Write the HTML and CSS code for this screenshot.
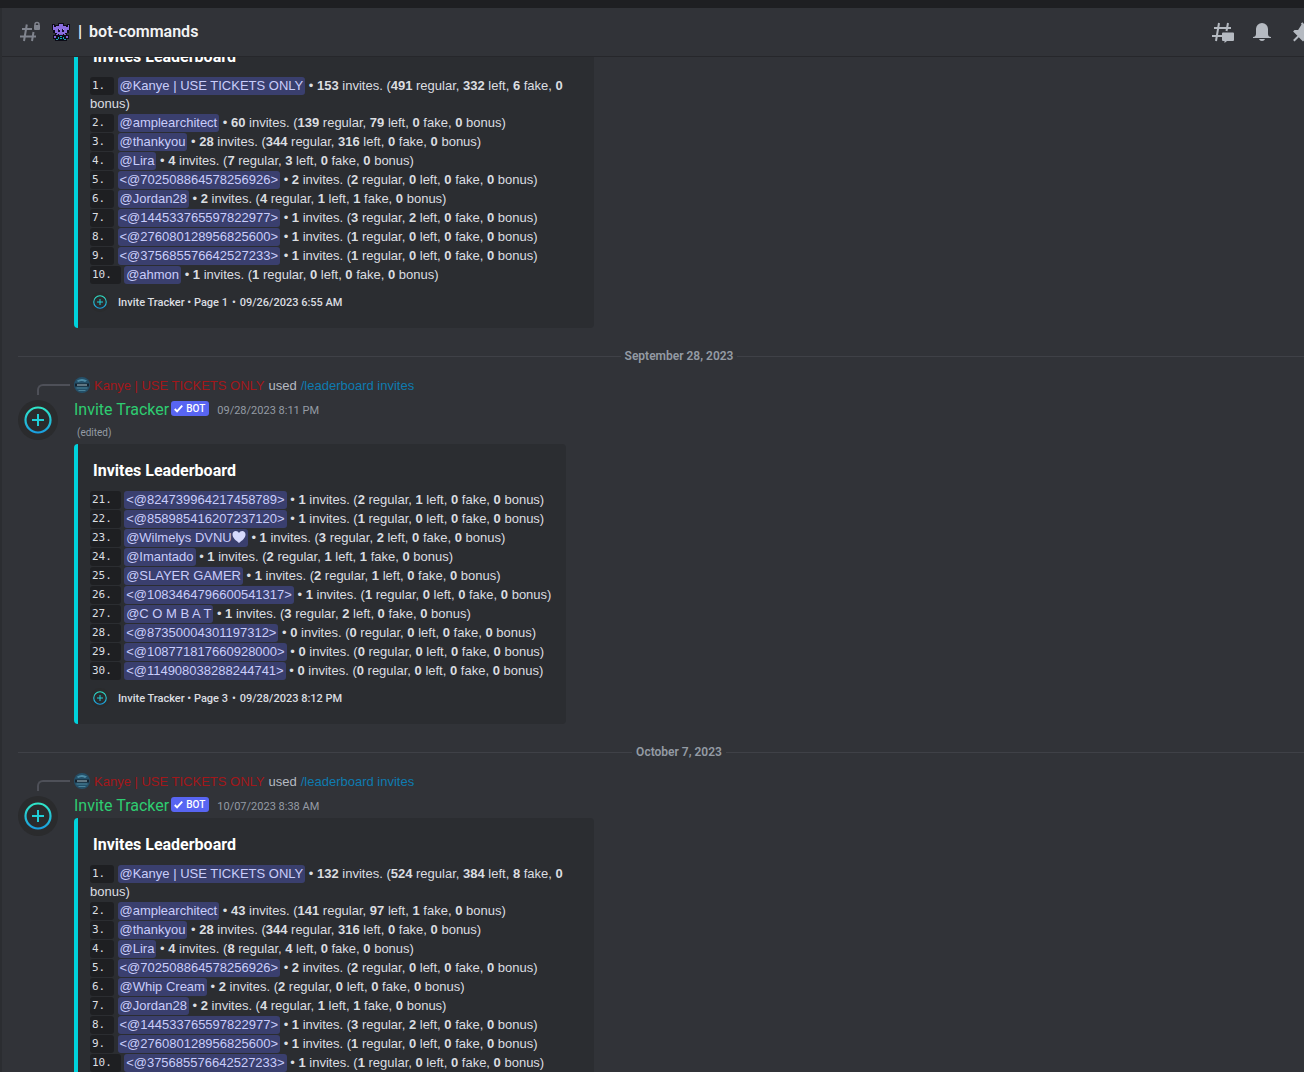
FILE: index.html
```
<!DOCTYPE html>
<html lang="en">
<head>
    <meta charset="UTF-8">
    <meta name="viewport" content="width=device-width, initial-scale=1.0">
    <title>bot-commands</title>
    <link rel="stylesheet" href="styles.css">
</head>
<body>
    <!-- Shared icons -->
    <svg class="icon-defs" aria-hidden="true">
        <defs>
            <linearGradient id="ring" x1="0" y1="0" x2="0" y2="1">
                <stop offset="0" stop-color="#2fe6c8"/>
                <stop offset="1" stop-color="#1a9fe0"/>
            </linearGradient>
            <symbol id="tracker" viewBox="0 0 40 40">
                <circle cx="20" cy="20" r="20" fill="#2a2b2d"/>
                <circle cx="20" cy="20" r="12.5" fill="none" stroke="url(#ring)" stroke-width="2.2"/>
                <path d="M20 14v12M14 20h12" stroke="#20cfd8" stroke-width="2" fill="none"/>
            </symbol>
            <symbol id="globe" viewBox="0 0 16 16">
                <circle cx="8" cy="8" r="8" fill="#245069"/>
                <path d="M3 3.5Q8 .5 13 3.500L11 5Q8 3 4 5z" fill="#4d8ba5"/>
                <path d="M1 6.500h14v3H1z" fill="#14222f"/>
                <path d="M3 8h10" stroke="#a5c3cf" stroke-width="1.500" stroke-opacity=".7"/>
                <path d="M2.500 11h11M4.500 13.500h7" stroke="#4a8299" stroke-width="1"/>
            </symbol>
            <symbol id="check" viewBox="0 0 16 16">
                <path d="M4 8.500 6.500 11 12 5" fill="none" stroke="#fff" stroke-width="2"/>
            </symbol>
        </defs>
    </svg>

    <div class="title-bar"></div>
    <div class="app">
        <header class="channel-header">
            <svg class="channel-icon" viewBox="0 0 24 24" aria-hidden="true">
                <path d="M8.800 4.500 6 21M15.500 12 14 21M4 9h10M2 16.500h16" fill="none" stroke="#80848e" stroke-width="2"/>
                <path d="M17 6V4.500a2 2 0 0 1 4 0V6" fill="none" stroke="#80848e" stroke-width="1.500"/>
                <rect x="16" y="5" width="6" height="5" rx="1" fill="#80848e"/>
            </svg>
            <svg class="channel-emoji" viewBox="0 0 18 18" shape-rendering="crispEdges" aria-hidden="true">
                <path d="M0 1h3v1h3V0h6v2h3V1h3v6h-1v3h-2v2h2v4h-2v2H3v-2H1v-4h2v-2H1V7H0z" fill="#0c0b16"/>
                <path d="M1 2h1v2h2V3h3V1h4v2h3v1h2V2h1v5h-2v3h-2v1H5v-1H3V7H1z" fill="#8b6ee0"/>
                <path d="M6 6h2v3H6zM10 6h2v3h-2z" fill="#15102b"/>
                <path d="M7 6h1v1H7zM11 6h1v1h-1z" fill="#b59bf5"/>
                <path d="M2 13h2v2H2zM14 13h2v2h-2zM4 11h2v1H4zM12 11h2v1h-2zM7 11h4v1H7z" fill="#7d61cf"/>
                <path d="M8 13h2v1H8zM6 14h1v2H6zM11 14h1v2h-1zM8 15h2v1H8zM4 16h2v1H4zM12 16h2v1h-2z" fill="#13a6b4"/>
            </svg>
            <h1 class="channel-name"><span class="bar">|</span>bot-commands</h1>
            <div class="toolbar">
                <button type="button" aria-label="Threads">
                    <svg viewBox="0 0 24 24">
                        <path d="M9 3 6 21M18 3l-1.500 8M4 8h17M2 16h10" fill="none" stroke="#b5bac1" stroke-width="2"/>
                        <path d="M13 12.500h10a1 1 0 0 1 1 1V20a1 1 0 0 1-1 1h-6l-2.500 2v-2H13a1 1 0 0 1-1-1v-6.500a1 1 0 0 1 1-1z" fill="#b5bac1"/>
                    </svg>
                </button>
                <button type="button" aria-label="Notification settings">
                    <svg viewBox="0 0 24 24">
                        <path d="M18 9v5c0 1.700 1.300 3 3 3v1H3v-1c1.700 0 3-1.300 3-3V9a6 6 0 0 1 12 0zM12 21c-1.500 0-2.500-.7-3-2h6c-.5 1.300-1.500 2-3 2z" fill="#b5bac1"/>
                    </svg>
                </button>
                <button type="button" aria-label="Pinned messages">
                    <svg viewBox="0 0 24 24">
                        <path d="M22 12 12.300 2.300 10.900 3.700l.7.700-3.500 5.700H4.500L3.100 11.500l4.300 4.300-4.300 4.200 1.400 1.400 4.300-4.200 4.200 4.200 1.400-1.400v-3.500l5-4.200.7.700z" fill="#b5bac1"/>
                    </svg>
                </button>
            </div>
        </header>

        <main class="messages">
            <article class="message first">
                <div class="embed">
                    <h2 class="embed-title">Invites Leaderboard</h2>
                    <ul class="ranks">
                        <li><code>1. </code> <span class="mention">@Kanye | USE TICKETS ONLY</span> • <b>153</b> invites. (<b>491</b> regular, <b>332</b> left, <b>6</b> fake, <b>0</b> bonus)</li>
                        <li><code>2. </code> <span class="mention">@amplearchitect</span> • <b>60</b> invites. (<b>139</b> regular, <b>79</b> left, <b>0</b> fake, <b>0</b> bonus)</li>
                        <li><code>3. </code> <span class="mention">@thankyou</span> • <b>28</b> invites. (<b>344</b> regular, <b>316</b> left, <b>0</b> fake, <b>0</b> bonus)</li>
                        <li><code>4. </code> <span class="mention">@Lira</span> • <b>4</b> invites. (<b>7</b> regular, <b>3</b> left, <b>0</b> fake, <b>0</b> bonus)</li>
                        <li><code>5. </code> <span class="mention">&lt;@702508864578256926&gt;</span> • <b>2</b> invites. (<b>2</b> regular, <b>0</b> left, <b>0</b> fake, <b>0</b> bonus)</li>
                        <li><code>6. </code> <span class="mention">@Jordan28</span> • <b>2</b> invites. (<b>4</b> regular, <b>1</b> left, <b>1</b> fake, <b>0</b> bonus)</li>
                        <li><code>7. </code> <span class="mention">&lt;@144533765597822977&gt;</span> • <b>1</b> invites. (<b>3</b> regular, <b>2</b> left, <b>0</b> fake, <b>0</b> bonus)</li>
                        <li><code>8. </code> <span class="mention">&lt;@276080128956825600&gt;</span> • <b>1</b> invites. (<b>1</b> regular, <b>0</b> left, <b>0</b> fake, <b>0</b> bonus)</li>
                        <li><code>9. </code> <span class="mention">&lt;@375685576642527233&gt;</span> • <b>1</b> invites. (<b>1</b> regular, <b>0</b> left, <b>0</b> fake, <b>0</b> bonus)</li>
                        <li><code>10. </code> <span class="mention">@ahmon</span> • <b>1</b> invites. (<b>1</b> regular, <b>0</b> left, <b>0</b> fake, <b>0</b> bonus)</li>
                    </ul>
                    <footer class="embed-footer">
                        <svg class="footer-icon" aria-hidden="true"><use href="#tracker"/></svg>
                        <span>Invite Tracker • Page 1</span>
                        <span class="dot">•</span>
                        <time>09/26/2023 6:55 AM</time>
                    </footer>
                </div>
            </article>

            <div class="divider"><span>September 28, 2023</span></div>

            <article class="message">
                <div class="reply">
                    <span class="spine"></span>
                    <svg class="reply-avatar" aria-hidden="true"><use href="#globe"/></svg>
                    <span class="reply-name">Kanye | USE TICKETS ONLY</span>
                    <span>used</span>
                    <a class="command" href="#">/leaderboard invites</a>
                </div>
                <div class="message-body">
                    <svg class="avatar" aria-hidden="true"><use href="#tracker"/></svg>
                    <div class="content">
                        <div class="author-line">
                            <span class="author">Invite Tracker</span>
                            <span class="bot-tag"><svg aria-hidden="true"><use href="#check"/></svg>BOT</span>
                            <time>09/28/2023 8:11 PM</time>
                        </div>
                        <div class="edited">(edited)</div>
                        <div class="embed compact">
                            <h2 class="embed-title">Invites Leaderboard</h2>
                            <ul class="ranks">
                                <li><code>21. </code> <span class="mention">&lt;@824739964217458789&gt;</span> • <b>1</b> invites. (<b>2</b> regular, <b>1</b> left, <b>0</b> fake, <b>0</b> bonus)</li>
                                <li><code>22. </code> <span class="mention">&lt;@858985416207237120&gt;</span> • <b>1</b> invites. (<b>1</b> regular, <b>0</b> left, <b>0</b> fake, <b>0</b> bonus)</li>
                                <li><code>23. </code> <span class="mention">@Wilmelys DVNU<svg class="heart" viewBox="0 0 14 14" role="img" aria-label="heart"><path d="M7 13C4 10.500.5 8 .5 4.500.5 2.500 2 1 3.800 1 5.200 1 6.400 1.800 7 3c.6-1.200 1.800-2 3.200-2C12 1 13.500 2.500 13.500 4.500 13.500 8 10 10.500 7 13z"/></svg></span> • <b>1</b> invites. (<b>3</b> regular, <b>2</b> left, <b>0</b> fake, <b>0</b> bonus)</li>
                                <li><code>24. </code> <span class="mention">@Imantado</span> • <b>1</b> invites. (<b>2</b> regular, <b>1</b> left, <b>1</b> fake, <b>0</b> bonus)</li>
                                <li><code>25. </code> <span class="mention">@SLAYER GAMER</span> • <b>1</b> invites. (<b>2</b> regular, <b>1</b> left, <b>0</b> fake, <b>0</b> bonus)</li>
                                <li><code>26. </code> <span class="mention">&lt;@1083464796600541317&gt;</span> • <b>1</b> invites. (<b>1</b> regular, <b>0</b> left, <b>0</b> fake, <b>0</b> bonus)</li>
                                <li><code>27. </code> <span class="mention">@C O M B A T</span> • <b>1</b> invites. (<b>3</b> regular, <b>2</b> left, <b>0</b> fake, <b>0</b> bonus)</li>
                                <li><code>28. </code> <span class="mention">&lt;@87350004301197312&gt;</span> • <b>0</b> invites. (<b>0</b> regular, <b>0</b> left, <b>0</b> fake, <b>0</b> bonus)</li>
                                <li><code>29. </code> <span class="mention">&lt;@108771817660928000&gt;</span> • <b>0</b> invites. (<b>0</b> regular, <b>0</b> left, <b>0</b> fake, <b>0</b> bonus)</li>
                                <li><code>30. </code> <span class="mention">&lt;@114908038288244741&gt;</span> • <b>0</b> invites. (<b>0</b> regular, <b>0</b> left, <b>0</b> fake, <b>0</b> bonus)</li>
                            </ul>
                            <footer class="embed-footer">
                                <svg class="footer-icon" aria-hidden="true"><use href="#tracker"/></svg>
                                <span>Invite Tracker • Page 3</span>
                                <span class="dot">•</span>
                                <time>09/28/2023 8:12 PM</time>
                            </footer>
                        </div>
                    </div>
                </div>
            </article>

            <div class="divider"><span>October 7, 2023</span></div>

            <article class="message">
                <div class="reply">
                    <span class="spine"></span>
                    <svg class="reply-avatar" aria-hidden="true"><use href="#globe"/></svg>
                    <span class="reply-name">Kanye | USE TICKETS ONLY</span>
                    <span>used</span>
                    <a class="command" href="#">/leaderboard invites</a>
                </div>
                <div class="message-body">
                    <svg class="avatar" aria-hidden="true"><use href="#tracker"/></svg>
                    <div class="content">
                        <div class="author-line">
                            <span class="author">Invite Tracker</span>
                            <span class="bot-tag"><svg aria-hidden="true"><use href="#check"/></svg>BOT</span>
                            <time>10/07/2023 8:38 AM</time>
                        </div>
                        <div class="embed">
                            <h2 class="embed-title">Invites Leaderboard</h2>
                            <ul class="ranks">
                                <li><code>1. </code> <span class="mention">@Kanye | USE TICKETS ONLY</span> • <b>132</b> invites. (<b>524</b> regular, <b>384</b> left, <b>8</b> fake, <b>0</b> bonus)</li>
                                <li><code>2. </code> <span class="mention">@amplearchitect</span> • <b>43</b> invites. (<b>141</b> regular, <b>97</b> left, <b>1</b> fake, <b>0</b> bonus)</li>
                                <li><code>3. </code> <span class="mention">@thankyou</span> • <b>28</b> invites. (<b>344</b> regular, <b>316</b> left, <b>0</b> fake, <b>0</b> bonus)</li>
                                <li><code>4. </code> <span class="mention">@Lira</span> • <b>4</b> invites. (<b>8</b> regular, <b>4</b> left, <b>0</b> fake, <b>0</b> bonus)</li>
                                <li><code>5. </code> <span class="mention">&lt;@702508864578256926&gt;</span> • <b>2</b> invites. (<b>2</b> regular, <b>0</b> left, <b>0</b> fake, <b>0</b> bonus)</li>
                                <li><code>6. </code> <span class="mention">@Whip Cream</span> • <b>2</b> invites. (<b>2</b> regular, <b>0</b> left, <b>0</b> fake, <b>0</b> bonus)</li>
                                <li><code>7. </code> <span class="mention">@Jordan28</span> • <b>2</b> invites. (<b>4</b> regular, <b>1</b> left, <b>1</b> fake, <b>0</b> bonus)</li>
                                <li><code>8. </code> <span class="mention">&lt;@144533765597822977&gt;</span> • <b>1</b> invites. (<b>3</b> regular, <b>2</b> left, <b>0</b> fake, <b>0</b> bonus)</li>
                                <li><code>9. </code> <span class="mention">&lt;@276080128956825600&gt;</span> • <b>1</b> invites. (<b>1</b> regular, <b>0</b> left, <b>0</b> fake, <b>0</b> bonus)</li>
                                <li><code>10. </code> <span class="mention">&lt;@375685576642527233&gt;</span> • <b>1</b> invites. (<b>1</b> regular, <b>0</b> left, <b>0</b> fake, <b>0</b> bonus)</li>
                            </ul>
                        </div>
                    </div>
                </div>
            </article>
        </main>
    </div>
</body>
</html>
```
FILE: styles.css
```
* {
    box-sizing: border-box;
}
body {
    font-family: Roboto, "Liberation Sans", sans-serif;
    font-size: 13px;
    margin: 0;
    height: 100vh;
    display: flex;
    flex-direction: column;
    overflow: hidden;
    background: #313338;
    color: #dbdee1;
}
.icon-defs {
    position: absolute;
    width: 0;
    height: 0;
}
.title-bar {
    flex: none;
    height: 8px;
    background: #1e1f22;
}

/* The chat pane runs on past the right edge of the window */
.app {
    flex: 1;
    min-height: 0;
    display: flex;
    flex-direction: column;
    width: calc(100% + 36px);
    border-left: 2px solid #2b2d31;
}

/* Channel header */
.channel-header {
    flex: none;
    display: flex;
    align-items: center;
    height: 49px;
    padding: 0 26px 0 16px;
    border-bottom: 1px solid #26272b;
}
.channel-icon {
    width: 24px;
    height: 24px;
    margin-right: 10px;
}
.channel-emoji {
    width: 18px;
    height: 18px;
    margin-right: 8px;
}
.channel-name {
    display: flex;
    gap: 7px;
    margin: 0;
    font-size: 16px;
    line-height: 20px;
    font-weight: 600;
    color: #f2f3f5;
}
.channel-name .bar {
    font-weight: 900;
}
.toolbar {
    display: flex;
    gap: 16px;
    margin-left: auto;
}
.toolbar button {
    width: 24px;
    height: 24px;
    padding: 0;
    border: none;
    background: none;
    cursor: pointer;
}
.toolbar svg {
    display: block;
    width: 24px;
    height: 24px;
}

/* Messages */
.messages {
    flex: 1;
    min-height: 0;
    overflow: hidden;
    padding-left: 16px;
}
.message.first {
    margin-top: -27px;
    padding-left: 56px;
}
.divider {
    display: flex;
    align-items: center;
    height: 16px;
    margin: 20px 0 12px;
    font-size: 12px;
    font-weight: 600;
    color: #949ba4;
}
.divider::before,
.divider::after {
    content: "";
    flex: 1;
    height: 1px;
    background: #3f4147;
}
.divider span {
    padding: 0 4px;
}
.reply {
    display: flex;
    align-items: center;
    gap: 4px;
    height: 18px;
    margin-bottom: 4px;
    font-family: "Liberation Sans", Arial, sans-serif;
    color: #b5bac1;
}
.spine {
    width: 33px;
    height: 11px;
    margin: 8px 0 0 19px;
    border-left: 2px solid #4e5058;
    border-top: 2px solid #4e5058;
    border-top-left-radius: 6px;
}
.reply-avatar {
    width: 16px;
    height: 16px;
}
.reply-name {
    color: #a3171a;
}
.command {
    color: #0e7bb0;
    text-decoration: none;
}
.message-body {
    display: flex;
    gap: 16px;
}
.avatar {
    flex: none;
    width: 40px;
    height: 40px;
    margin-top: 2px;
}
.content {
    flex: 1;
    min-width: 0;
}
.author-line {
    display: flex;
    align-items: center;
    height: 22px;
    margin-bottom: 2px;
}
.author {
    font-size: 16px;
    font-weight: 400;
    color: #2ecc71;
}
.bot-tag {
    display: flex;
    align-items: center;
    height: 15px;
    margin: 0 8px 2px 2px;
    padding-right: 4px;
    border-radius: 3px;
    background: #5865f2;
    color: #fff;
    font-size: 10px;
    font-weight: 500;
}
.bot-tag svg {
    width: 15px;
    height: 15px;
}
.author-line time {
    padding-top: 2px;
    font-size: 11px;
    color: #949ba4;
}
.edited {
    height: 22px;
    padding-left: 3px;
    font-size: 10px;
    line-height: 22px;
    color: #949ba4;
}

/* Embeds */
.embed {
    max-width: 520px;
    padding: 16px 12px;
    border-left: 4px solid #00d2dc;
    border-radius: 4px;
    background: #2b2d31;
}
.embed.compact {
    max-width: 492px;
}
.embed-title {
    margin: 0 0 8px;
    padding-left: 3px;
    font-size: 16px;
    line-height: 22px;
    font-weight: 700;
    color: #fff;
}
.ranks {
    margin: 0;
    padding: 0;
    list-style: none;
    font-family: "Liberation Sans", Arial, sans-serif;
}
.ranks li {
    padding-top: 1px;
    line-height: 18px;
}
.ranks b {
    font-weight: 700;
}
.ranks code {
    display: inline-block;
    height: 18px;
    padding: 0 2px;
    border-radius: 3px;
    background: #1e1f22;
    font-family: "DejaVu Sans Mono", monospace;
    font-size: 11px;
    vertical-align: top;
    white-space: pre;
}
.mention {
    display: inline-block;
    height: 18px;
    padding: 0 2px;
    border-radius: 3px;
    background: #3a3f6e;
    color: #c9cdfb;
    vertical-align: top;
}
.heart {
    width: 14px;
    height: 14px;
    vertical-align: -2px;
    fill: #d6d9fd;
}
.embed-footer {
    display: flex;
    align-items: center;
    height: 20px;
    margin-top: 8px;
    font-size: 11px;
    font-weight: 500;
}
.footer-icon {
    width: 20px;
    height: 20px;
    margin-right: 8px;
}
.dot {
    margin: 0 4px;
}
```
